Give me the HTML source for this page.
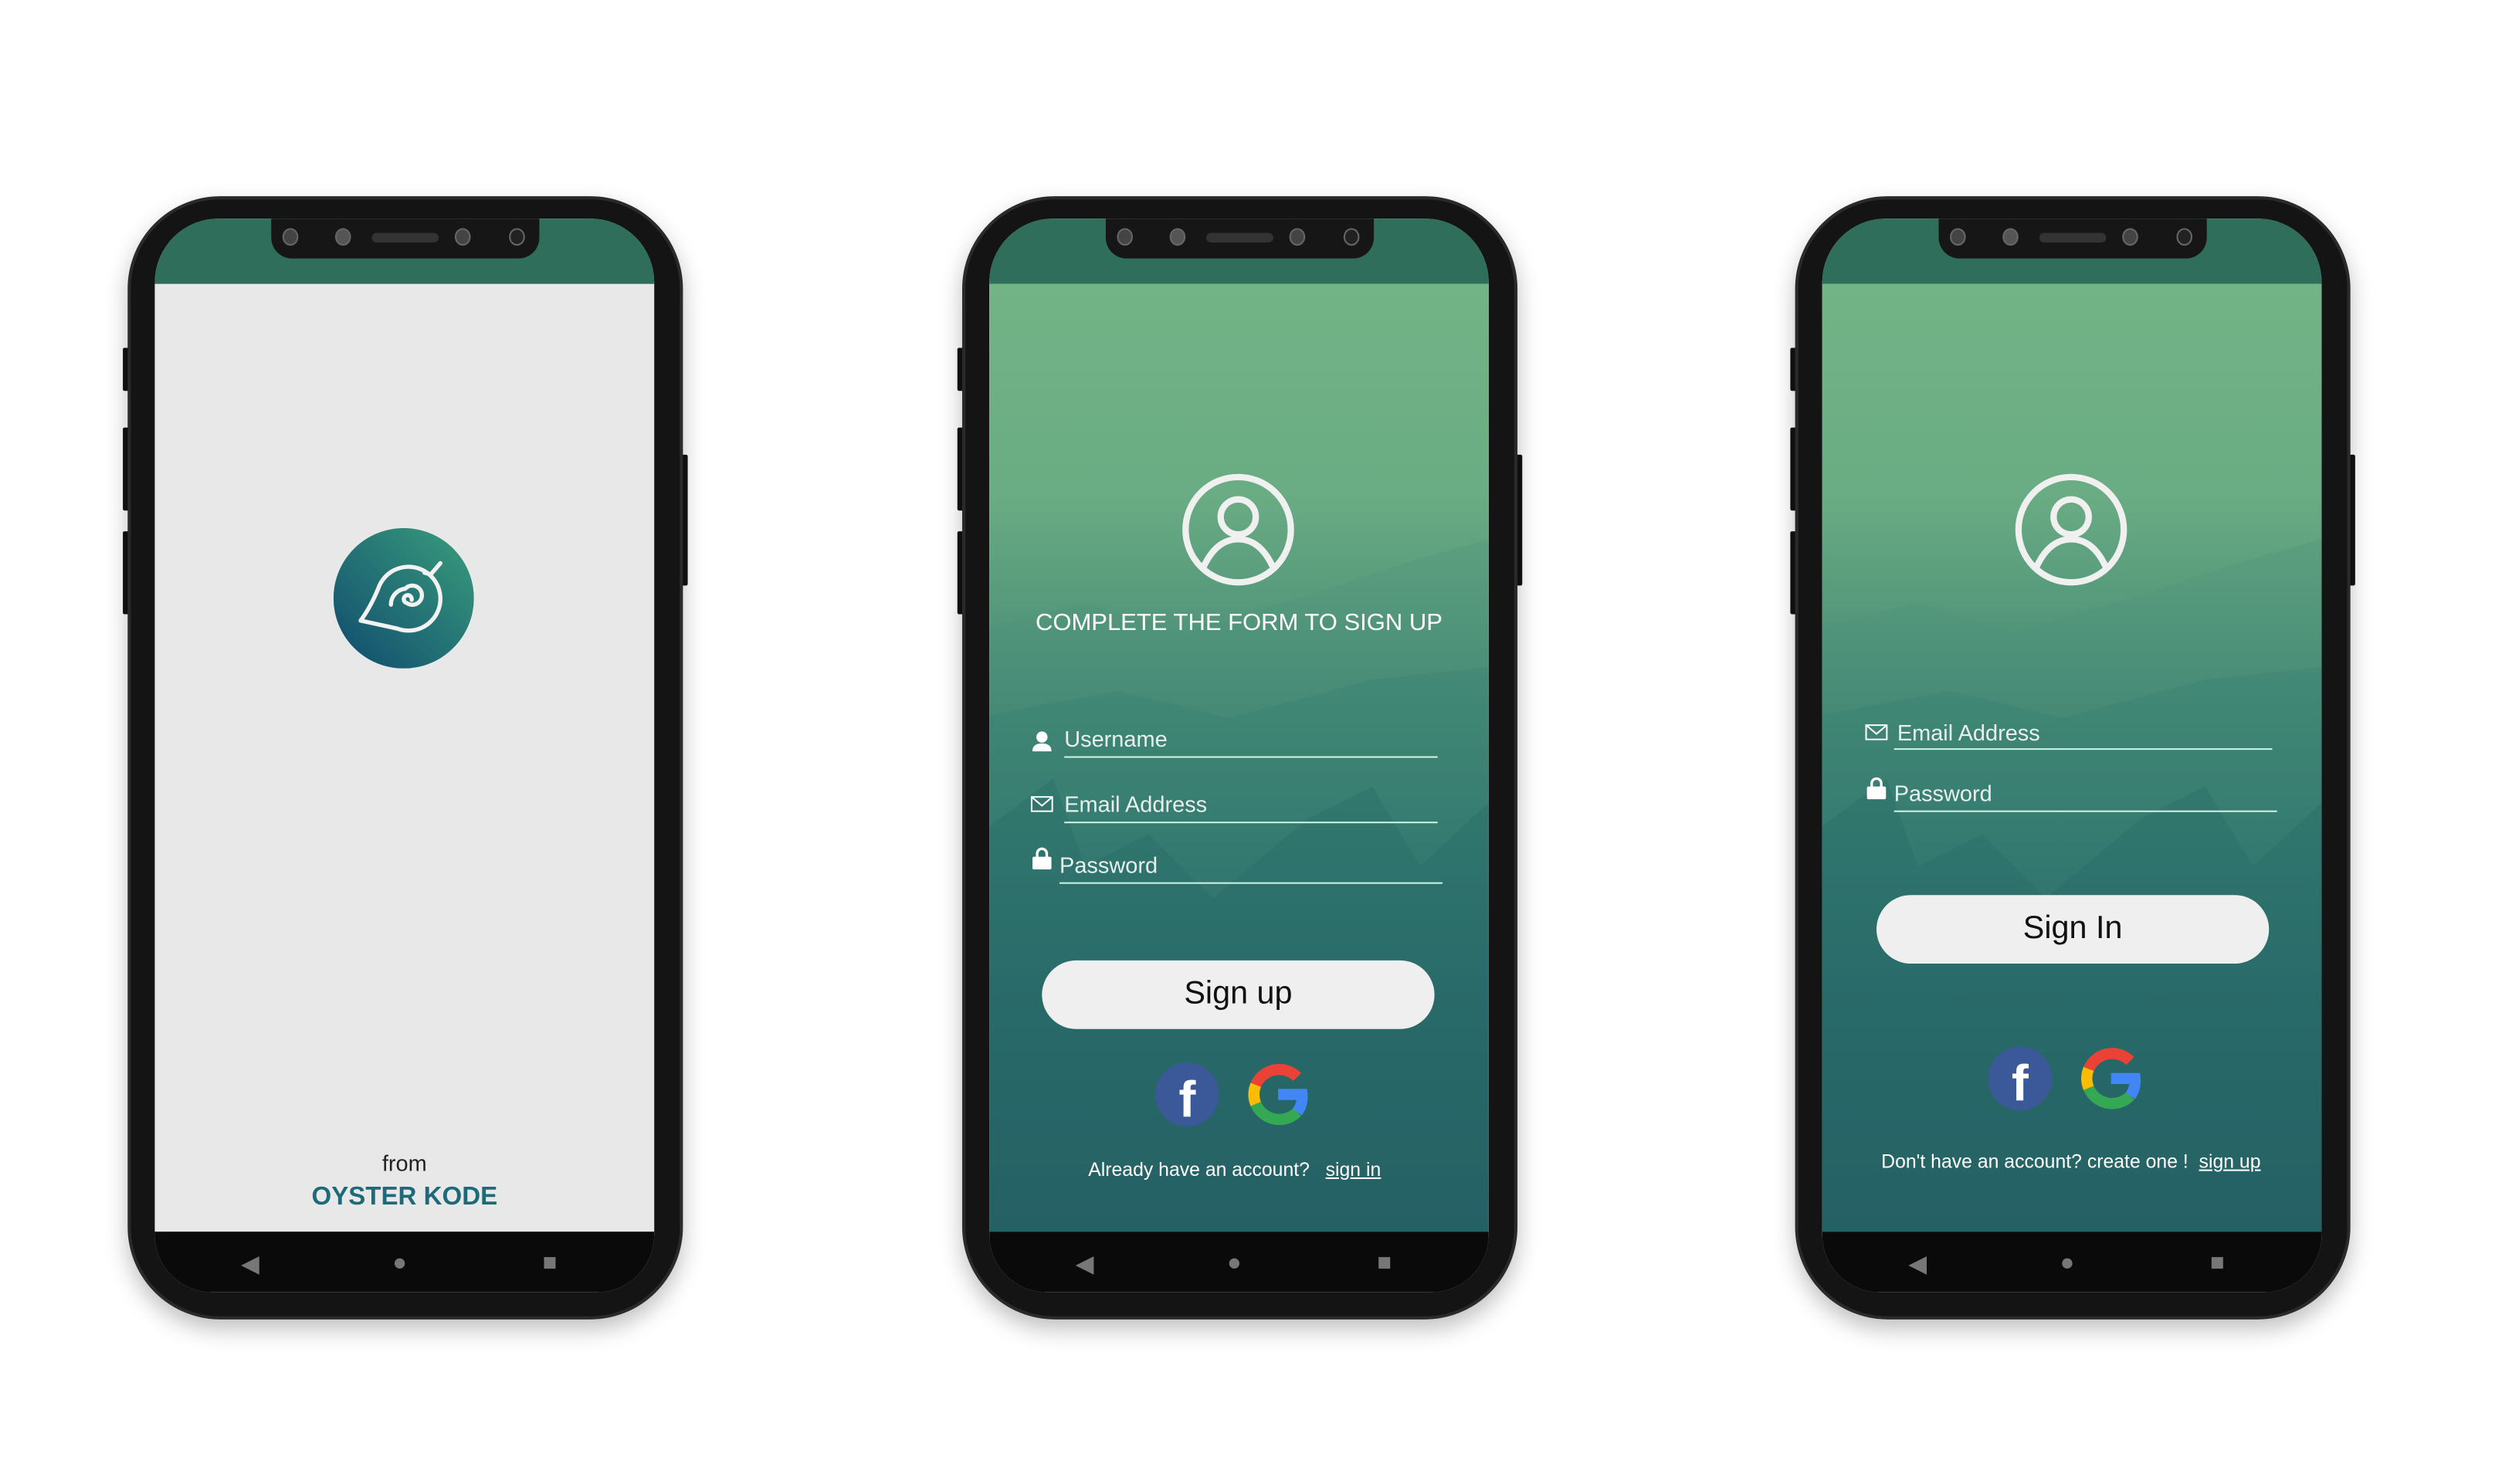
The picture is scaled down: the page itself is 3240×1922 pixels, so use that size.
<!DOCTYPE html>
<html><head><meta charset="utf-8"><style>
html,body{margin:0;padding:0;background:#fff;width:3240px;height:1920px;overflow:hidden}
#w{position:absolute;left:0;top:0;width:1568px;height:930px;transform:scale(2.0663);transform-origin:0 0;font-family:"Liberation Sans",sans-serif}
.ph{position:absolute;top:123px;width:348px;height:704px}
.body{position:absolute;left:0;top:0;width:344px;height:700px;border-radius:58px;background:#141414;border:2px solid #2a2a2a;box-shadow:0 6px 14px rgba(0,0,0,.25)}
.btn{position:absolute;background:#111;width:4px;border-radius:1px}
.scr{position:absolute;left:17px;top:14px;width:313px;height:673px;border-radius:40px 40px 36px 36px;overflow:hidden;background:#e8e8e8}
.sb{position:absolute;left:0;top:0;width:313px;height:41px;background:#2e6e5a}
.notch{position:absolute;left:73px;top:0;width:168px;height:25px;background:#161616;border-radius:0 0 13px 13px}
.cam{position:absolute;top:6px;width:10px;height:11px;border-radius:50%;background:#444;border:1px solid #666;box-sizing:border-box}
.spk{position:absolute;left:63px;top:9px;width:42px;height:6px;border-radius:3px;background:#333}
.nav{position:absolute;left:0;top:635px;width:313px;height:38px;background:#0a0a0a}
.nav span{position:absolute;top:11px;color:#777;font-size:15px}
.cont{position:absolute;left:0;top:41px;width:313px;height:594px}
.g{background:linear-gradient(180deg,#73b486 0%,#6aac83 22%,#4c9078 40%,#32756e 58%,#205a65 76%,#17445a 100%)}
.t{position:absolute;color:#fff;white-space:nowrap}
.ln{position:absolute;height:1px;background:#dfe;opacity:.9}
.b{position:absolute;height:43px;border-radius:22px;background:#efefef;color:#111;font-size:20px;text-align:center;line-height:43px}
</style></head><body><div id="w">

<!-- phone 1 -->
<div class="ph" style="left:80px">
<div class="btn" style="left:-3px;top:95px;height:27px"></div><div class="btn" style="left:-3px;top:145px;height:52px"></div><div class="btn" style="left:-3px;top:210px;height:52px"></div><div class="btn" style="left:347px;top:162px;height:82px"></div>
<div class="body"></div>
<div class="scr">
<div class="sb"></div>
<div class="notch"><div class="cam" style="left:7px"></div><div class="cam" style="left:40px;background:#555"></div><div class="spk"></div><div class="cam" style="left:115px"></div><div class="cam" style="left:149px;background:#222"></div></div>
<div class="cont" style="background:#e8e8e8">
<svg style="position:absolute;left:112px;top:153px" width="88" height="88" viewBox="0 0 88 88"><defs><linearGradient id="lg" x1="0" y1="1" x2="1" y2="0"><stop offset="0" stop-color="#0f4a6e"/><stop offset="1" stop-color="#3a9e7c"/></linearGradient></defs><circle cx="44" cy="44" r="44" fill="url(#lg)"/>
<g fill="none" stroke="#f2f2f2" stroke-width="2.6" stroke-linecap="round" stroke-linejoin="round"><path d="M17 58 L40 63 A20 20 0 1 0 28 38 Q23 50 17 58"/><path d="M57 28 L61 29 L67 22"/><path d="M49 45 a2.5 2.5 0 1 0 -3 2 a6 6 0 1 0 -1 -9 A10 10 0 0 0 36 48"/></g></svg>
<div class="t" style="left:0;width:313px;text-align:center;top:543px;color:#222;font-size:14px">from</div>
<div class="t" style="left:0;width:313px;text-align:center;top:564px;color:#1d6a78;font-size:16px;font-weight:bold">OYSTER KODE</div>
</div>
<div class="nav"><span style="left:54px">◀</span><span style="left:149px">●</span><span style="left:243px">■</span></div>
</div></div>

<!-- phone 2 -->
<div class="ph" style="left:603px">
<div class="btn" style="left:-3px;top:95px;height:27px"></div><div class="btn" style="left:-3px;top:145px;height:52px"></div><div class="btn" style="left:-3px;top:210px;height:52px"></div><div class="btn" style="left:347px;top:162px;height:82px"></div>
<div class="body"></div>
<div class="scr">
<div class="sb"></div>
<div class="notch"><div class="cam" style="left:7px"></div><div class="cam" style="left:40px;background:#555"></div><div class="spk"></div><div class="cam" style="left:115px"></div><div class="cam" style="left:149px;background:#222"></div></div>
<div class="cont g">
<svg style="position:absolute;left:0;top:0" width="313" height="594"><path d="M0 215 L60 200 L120 218 L200 195 L260 175 L313 160 L313 594 L0 594Z" fill="#4a8f7c" opacity=".25"/><path d="M0 270 L80 255 L150 272 L240 248 L313 240 L313 594 L0 594Z" fill="#2f7a6e" opacity=".25"/><path d="M0 340 L40 310 L60 365 L100 345 L140 385 L200 335 L240 315 L270 365 L313 325 L313 594 L0 594Z" fill="#1f6363" opacity=".25"/></svg>
<svg style="position:absolute;left:120px;top:118px" width="72" height="72" viewBox="0 0 72 72"><g fill="none" stroke="#f0f0f0" stroke-width="4"><circle cx="36" cy="36" r="33"/><circle cx="36" cy="28" r="11"/><path d="M14 60 Q22 42 36 42 Q50 42 58 60"/></g></svg>
<div class="t" style="left:0;width:313px;text-align:center;top:204px;font-size:15px">COMPLETE THE FORM TO SIGN UP</div>
<svg style="position:absolute;left:27px;top:280px" width="12" height="13"><circle cx="6" cy="4" r="3.5" fill="#fff"/><path d="M0 13 Q0 8 6 8 Q12 8 12 13Z" fill="#fff"/></svg>
<div class="t" style="left:47px;top:277px;font-size:14px;color:#e8f0ec">Username</div><div class="ln" style="left:47px;top:296px;width:234px"></div>
<svg style="position:absolute;left:26px;top:321px" width="14" height="10"><rect x=".5" y=".5" width="13" height="9" fill="none" stroke="#fff"/><path d="M.5 .5 L7 6 L13.5 .5" fill="none" stroke="#fff"/></svg>
<div class="t" style="left:47px;top:318px;font-size:14px;color:#e8f0ec">Email Address</div><div class="ln" style="left:47px;top:337px;width:234px"></div>
<svg style="position:absolute;left:27px;top:353px" width="12" height="14"><path d="M3 7 V4 a3 3 0 0 1 6 0 V7" fill="none" stroke="#fff" stroke-width="1.6"/><rect x="0" y="6" width="12" height="8" rx="1" fill="#fff"/></svg>
<div class="t" style="left:44px;top:356px;font-size:14px;color:#e8f0ec">Password</div><div class="ln" style="left:44px;top:375px;width:240px"></div>
<div class="b" style="left:33px;top:424px;width:246px">Sign up</div>
<svg style="position:absolute;left:104px;top:488px" width="40" height="40"><circle cx="20" cy="20" r="20" fill="#3b5998"/><text x="20" y="34" text-anchor="middle" font-size="32" font-weight="bold" fill="#fff" font-family="Liberation Sans">f</text></svg>
<svg style="position:absolute;left:160px;top:488px" width="40" height="40" viewBox="0 0 40 40"><g fill="none" stroke-width="7"><path d="M33 9 A16 16 0 0 0 7 14" stroke="#ea4335"/><path d="M7 14 A16 16 0 0 0 7 26" stroke="#fbbc05"/><path d="M7 26 A16 16 0 0 0 33 31" stroke="#34a853"/><path d="M33 31 A16 16 0 0 0 36 20 H21" stroke="#4285f4"/></g></svg>
<div class="t" style="left:62px;top:548px;font-size:12px">Already have an account?&nbsp;&nbsp; <u>sign in</u></div>
</div>
<div class="nav"><span style="left:54px">◀</span><span style="left:149px">●</span><span style="left:243px">■</span></div>
</div></div>

<!-- phone 3 -->
<div class="ph" style="left:1125px">
<div class="btn" style="left:-3px;top:95px;height:27px"></div><div class="btn" style="left:-3px;top:145px;height:52px"></div><div class="btn" style="left:-3px;top:210px;height:52px"></div><div class="btn" style="left:347px;top:162px;height:82px"></div>
<div class="body"></div>
<div class="scr">
<div class="sb"></div>
<div class="notch"><div class="cam" style="left:7px"></div><div class="cam" style="left:40px;background:#555"></div><div class="spk"></div><div class="cam" style="left:115px"></div><div class="cam" style="left:149px;background:#222"></div></div>
<div class="cont g">
<svg style="position:absolute;left:0;top:0" width="313" height="594"><path d="M0 215 L60 200 L120 218 L200 195 L260 175 L313 160 L313 594 L0 594Z" fill="#4a8f7c" opacity=".25"/><path d="M0 270 L80 255 L150 272 L240 248 L313 240 L313 594 L0 594Z" fill="#2f7a6e" opacity=".25"/><path d="M0 340 L40 310 L60 365 L100 345 L140 385 L200 335 L240 315 L270 365 L313 325 L313 594 L0 594Z" fill="#1f6363" opacity=".25"/></svg>
<svg style="position:absolute;left:120px;top:118px" width="72" height="72" viewBox="0 0 72 72"><g fill="none" stroke="#f0f0f0" stroke-width="4"><circle cx="36" cy="36" r="33"/><circle cx="36" cy="28" r="11"/><path d="M14 60 Q22 42 36 42 Q50 42 58 60"/></g></svg>
<svg style="position:absolute;left:27px;top:276px" width="14" height="10"><rect x=".5" y=".5" width="13" height="9" fill="none" stroke="#fff"/><path d="M.5 .5 L7 6 L13.5 .5" fill="none" stroke="#fff"/></svg>
<div class="t" style="left:47px;top:273px;font-size:14px;color:#e8f0ec">Email Address</div><div class="ln" style="left:45px;top:291px;width:237px"></div>
<svg style="position:absolute;left:28px;top:309px" width="12" height="14"><path d="M3 7 V4 a3 3 0 0 1 6 0 V7" fill="none" stroke="#fff" stroke-width="1.6"/><rect x="0" y="6" width="12" height="8" rx="1" fill="#fff"/></svg>
<div class="t" style="left:45px;top:311px;font-size:14px;color:#e8f0ec">Password</div><div class="ln" style="left:45px;top:330px;width:240px"></div>
<div class="b" style="left:34px;top:383px;width:246px">Sign In</div>
<svg style="position:absolute;left:104px;top:478px" width="40" height="40"><circle cx="20" cy="20" r="20" fill="#3b5998"/><text x="20" y="34" text-anchor="middle" font-size="32" font-weight="bold" fill="#fff" font-family="Liberation Sans">f</text></svg>
<svg style="position:absolute;left:160px;top:478px" width="40" height="40" viewBox="0 0 40 40"><g fill="none" stroke-width="7"><path d="M33 9 A16 16 0 0 0 7 14" stroke="#ea4335"/><path d="M7 14 A16 16 0 0 0 7 26" stroke="#fbbc05"/><path d="M7 26 A16 16 0 0 0 33 31" stroke="#34a853"/><path d="M33 31 A16 16 0 0 0 36 20 H21" stroke="#4285f4"/></g></svg>
<div class="t" style="left:37px;top:543px;font-size:12px">Don't have an account? create one !&nbsp; <u>sign up</u></div>
</div>
<div class="nav"><span style="left:54px">◀</span><span style="left:149px">●</span><span style="left:243px">■</span></div>
</div></div>

</div></body></html>
